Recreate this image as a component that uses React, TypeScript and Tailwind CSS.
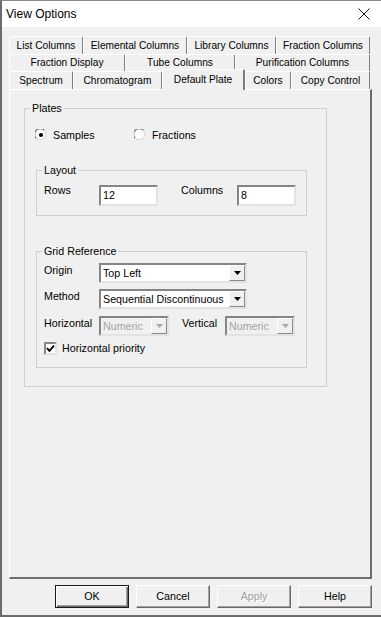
import React from "react";

type Tab = { label: string; w: string; active?: boolean };

const tabRows: Tab[][] = [
    [
        { label: "List Columns", w: "w-[74px]" },
        { label: "Elemental Columns", w: "w-[104px]" },
        { label: "Library Columns", w: "w-[89px]" },
        { label: "Fraction Columns", w: "w-[94px]" },
    ],
    [
        { label: "Fraction Display", w: "w-[116px]" },
        { label: "Tube Columns", w: "w-[110px]" },
        { label: "Purification Columns", w: "w-[135px]" },
    ],
    [
        { label: "Spectrum", w: "w-[64px]" },
        { label: "Chromatogram", w: "w-[89px]" },
        { label: "Default Plate", w: "w-[83px]", active: true },
        { label: "Colors", w: "w-[46px]" },
        { label: "Copy Control", w: "w-[79px]" },
    ],
];

const sunken =
    "border-2 border-t-[#858585] border-l-[#858585] border-r-[#e3e3e3] border-b-[#e3e3e3]";

const GroupBox = ({ label, className, children }: { label: string; className: string; children?: React.ReactNode }) => (
    <div className={`relative border border-[#cfcfcf] ${className}`}>
        <span className="absolute -top-[8px] left-[5px] bg-[#f0f0f0] px-[2px] leading-[14px]">{label}</span>
        {children}
    </div>
);

const Radio = ({ checked }: { checked?: boolean }) => (
    <svg width="12" height="12" viewBox="0 0 12 12" className="shrink-0">
        <circle cx="6" cy="6" r="5.4" fill="#fff" />
        <path d="M1.2 9.2 A5.4 5.4 0 0 1 9.2 1.2" stroke="#808080" strokeWidth="1.3" fill="none" />
        <path d="M9.2 1.2 A5.4 5.4 0 0 1 1.2 9.2" stroke="#dcdcdc" strokeWidth="1.3" fill="none" />
        {checked && <circle cx="6" cy="6" r="2.1" fill="#000" />}
    </svg>
);

const Arrow = ({ color }: { color: string }) => (
    <svg width="7" height="4" viewBox="0 0 7 4">
        <polygon points="0,0 7,0 3.5,4" fill={color} />
    </svg>
);

const Combo = ({ value, w, disabled }: { value: string; w: string; disabled?: boolean }) => (
    <div className={`${sunken} ${w} h-[20px] flex ${disabled ? "bg-[#f0f0f0]" : "bg-white"}`}>
        <div className={`flex-1 pl-[2px] leading-[16px] whitespace-nowrap overflow-hidden ${disabled ? "text-[#a3a3a3]" : ""}`}>
            {value}
        </div>
        <div className="w-[16px] h-[16px] flex items-center justify-center bg-[#f0f0f0] border border-t-white border-l-white border-r-[#8a8a8a] border-b-[#8a8a8a]">
            <Arrow color={disabled ? "#a8a8a8" : "#000"} />
        </div>
    </div>
);

const Edit = ({ value }: { value: string }) => (
    <div className={`${sunken} bg-white w-[59px] h-[21px] mt-[14px] pl-[2px] leading-[17px]`}>{value}</div>
);

const Button = ({ label, primary, disabled }: { label: string; primary?: boolean; disabled?: boolean }) => (
    <div
        className={`w-[74px] h-[23px] flex items-center justify-center bg-[#f0f0f0] ${
            primary
                ? "border border-[#1a1a1a] shadow-[inset_1px_1px_0_#fff,inset_-1px_-1px_0_#696969,inset_-2px_-2px_0_#a0a0a0]"
                : "border border-t-white border-l-white border-r-[#696969] border-b-[#696969] shadow-[inset_-1px_-1px_0_#a0a0a0]"
        } ${disabled ? "text-[#a0a0a0] [text-shadow:1px_1px_0_#fff]" : ""}`}
    >
        {label}
    </div>
);

export default function App() {
    return (
        <div className="w-[381px] h-[617px] overflow-hidden bg-[#f0f0f0] border-t border-t-[#8a8a8a] border-l-2 border-l-[#6b6b6b] border-b-2 border-b-[#6b6b6b] font-['Liberation_Sans',Arial,sans-serif] text-[10.7px] text-black flex flex-col">
            {/* title bar */}
            <div className="h-[26px] shrink-0 bg-white flex items-center justify-between pl-[4px] pr-[11px]">
                <span className="text-[12px]">View Options</span>
                <svg width="12" height="12" viewBox="0 0 12 12">
                    <path d="M0.5 0.5 L11.5 11.5 M11.5 0.5 L0.5 11.5" stroke="#111" strokeWidth="1" />
                </svg>
            </div>

            <div className="pt-[9px] pl-[7px] flex flex-col">
                {tabRows.map((row, i) => (
                    <div key={i} className={`flex items-start ${i === 1 ? "h-[17px]" : "h-[18px]"}`}>
                        {row.map((t) =>
                            t.active ? (
                                <div
                                    key={t.label}
                                    className={`${t.w} relative z-10 -mt-[2px] h-[21px] flex items-center justify-center bg-[#f0f0f0] border-t border-l border-t-white border-l-white border-r-2 border-r-[#7a7a7a] rounded-t-[2px] text-[10.2px] whitespace-nowrap`}
                                >
                                    {t.label}
                                </div>
                            ) : (
                                <div
                                    key={t.label}
                                    className={`${t.w} h-full flex items-center justify-center border-t border-l border-r border-t-white border-l-white border-r-[#7f7f7f] rounded-t-[2px] text-[10.2px] whitespace-nowrap`}
                                >
                                    {t.label}
                                </div>
                            )
                        )}
                    </div>
                ))}

                {/* tab page */}
                <div className="w-[363px] h-[490px] border-t border-l border-t-white border-l-white border-r-2 border-b-2 border-r-[#6d6d6d] border-b-[#6d6d6d] flex flex-col">
                    <GroupBox label="Plates" className="mt-[18px] ml-[14px] w-[303px] h-[279px] flex flex-col">
                        <div className="flex items-center h-[14px] mt-[19px] ml-[10px]">
                            <div className="flex items-center gap-[6px] w-[99px]">
                                <Radio checked />
                                <span>Samples</span>
                            </div>
                            <div className="flex items-center gap-[6px]">
                                <Radio />
                                <span>Fractions</span>
                            </div>
                        </div>

                        <GroupBox label="Layout" className="mt-[28px] ml-[11px] w-[271px] h-[46px]">
                            <div className="flex items-start pl-[7px]">
                                <span className="w-[55px] mt-[12px] leading-[14px]">Rows</span>
                                <Edit value="12" />
                                <span className="w-[56px] ml-[23px] mt-[12px] leading-[14px]">Columns</span>
                                <Edit value="8" />
                            </div>
                        </GroupBox>

                        <GroupBox label="Grid Reference" className="mt-[35px] ml-[11px] w-[271px] h-[117px]">
                            <div className="flex flex-col pl-[7px] pt-[11px]">
                                <div className="flex items-start">
                                    <span className="w-[55px] leading-[14px]">Origin</span>
                                    <Combo value="Top Left" w="w-[148px]" />
                                </div>
                                <div className="flex items-start mt-[6px]">
                                    <span className="w-[55px] leading-[14px]">Method</span>
                                    <Combo value="Sequential Discontinuous" w="w-[148px]" />
                                </div>
                                <div className="flex items-start mt-[7px]">
                                    <span className="w-[55px] leading-[14px]">Horizontal</span>
                                    <Combo value="Numeric" w="w-[70px]" disabled />
                                    <span className="w-[43px] ml-[13px] leading-[14px]">Vertical</span>
                                    <Combo value="Numeric" w="w-[70px]" disabled />
                                </div>
                                <div className="flex items-center gap-[5px] mt-[6px] h-[13px]">
                                    <div className={`${sunken} bg-white w-[13px] h-[13px] flex items-center justify-center`}>
                                        <svg width="9" height="9" viewBox="0 0 9 9">
                                            <path d="M1 4.2 L3.4 6.8 L8 1.6" stroke="#000" strokeWidth="1.8" fill="none" />
                                        </svg>
                                    </div>
                                    <span>Horizontal priority</span>
                                </div>
                            </div>
                        </GroupBox>
                    </GroupBox>
                </div>

                <div className="flex gap-[7px] pl-[46px] mt-[6px]">
                    <Button label="OK" primary />
                    <Button label="Cancel" />
                    <Button label="Apply" disabled />
                    <Button label="Help" />
                </div>
            </div>
        </div>
    );
}
